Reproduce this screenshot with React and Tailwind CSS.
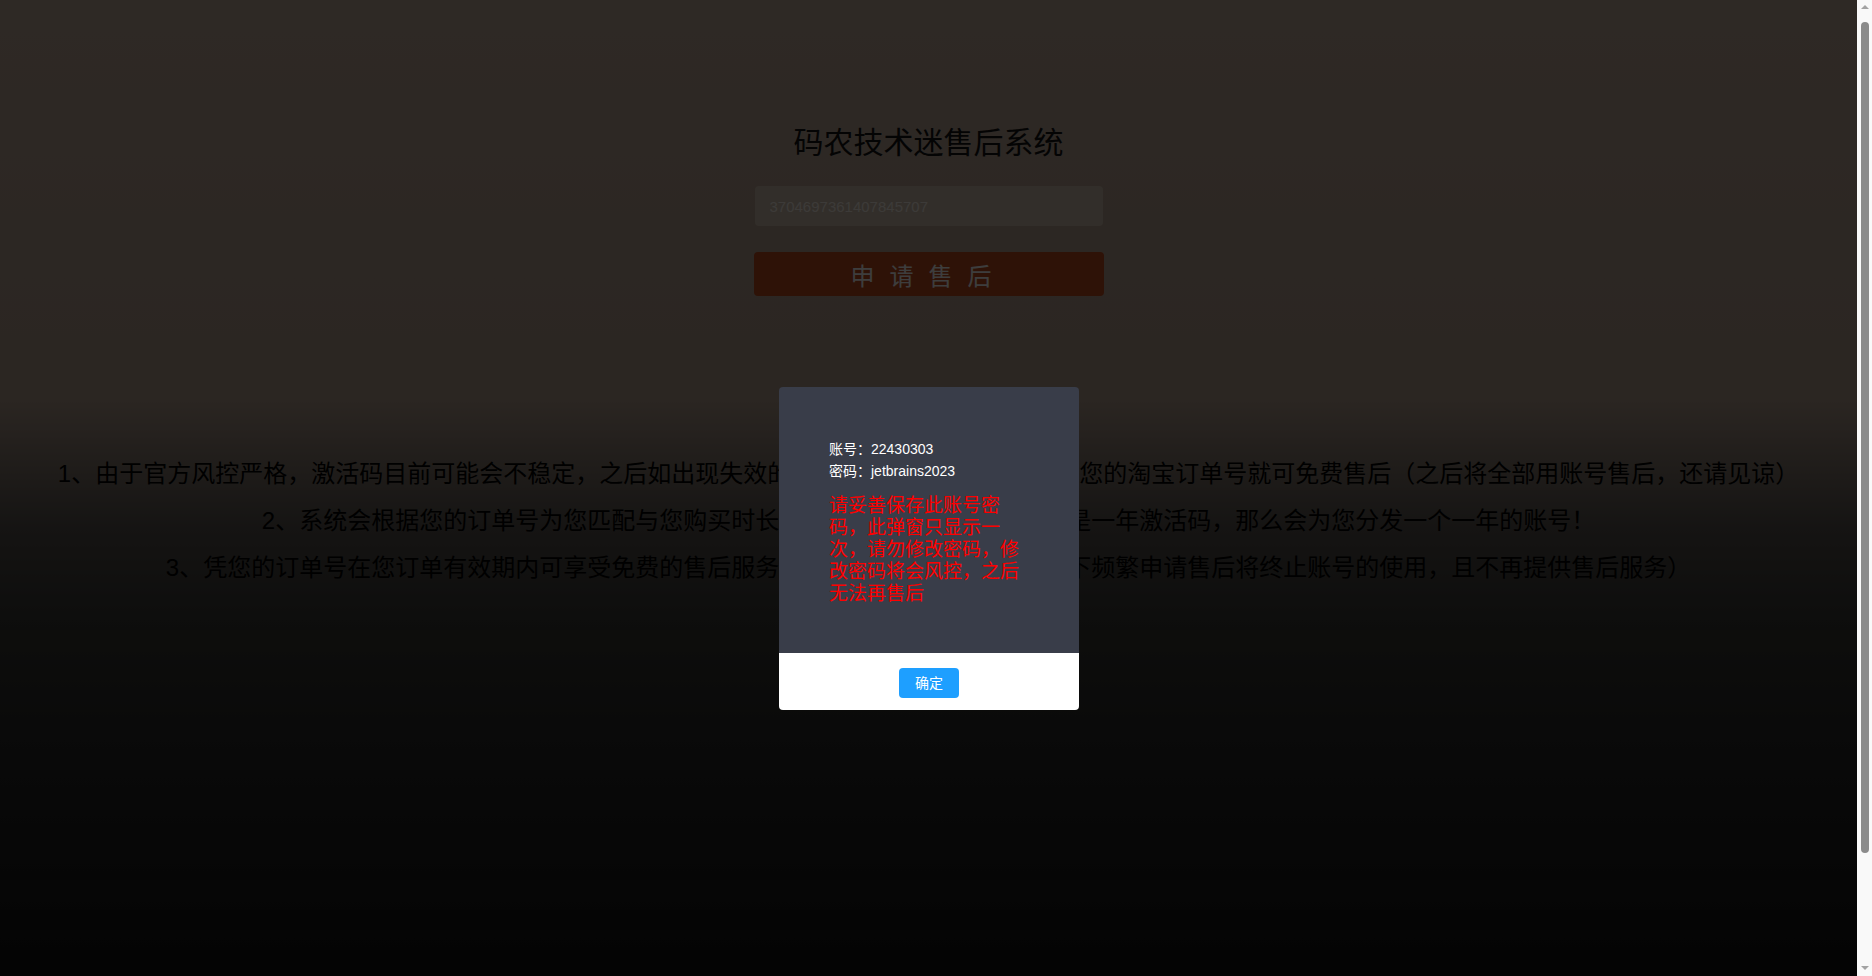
import React, { useState } from 'react';

const tips = [
  '1、由于官方风控严格，激活码目前可能会不稳定，之后如出现失效的情况，只需在此处重新输入您的淘宝订单号就可免费售后（之后将全部用账号售后，还请见谅）',
  '2、系统会根据您的订单号为您匹配与您购买时长相同的账号，比如您购买的是一年激活码，那么会为您分发一个一年的账号！',
  '3、凭您的订单号在您订单有效期内可享受免费的售后服务（若账号在正常使用的情况下频繁申请售后将终止账号的使用，且不再提供售后服务）',
];

const FakeScrollbar = () => (
  <div className="w-[15px] h-full bg-[#f9f9f9] flex flex-col items-center">
    <div className="mt-[5px] w-0 h-0 border-x-[4px] border-x-transparent border-b-[4px] border-b-[#a3a3a3]" />
    <div className="mt-[13px] w-[8px] h-[831px] rounded-full bg-[#8b8b8b]" />
    <div className="flex-1" />
    <div className="mb-[6px] w-0 h-0 border-x-[4px] border-x-transparent border-t-[4px] border-t-[#a3a3a3]" />
  </div>
);

export default function App() {
  const [open, setOpen] = useState(true);

  return (
    <div
      className="flex w-full h-[976px] overflow-hidden"
      style={{ fontFamily: '"Liberation Sans", "Noto Sans CJK SC", sans-serif' }}
    >
      <div className="relative flex-1 h-full bg-[linear-gradient(to_bottom,#c0ab9a_0px,#b39e8e_400px,#58534f_530px,#3a3a36_620px,#2a2a2a_740px,#111111_976px)]">
        {/* Form */}
        <div className="flex flex-col items-center pt-[123px]">
          <h1 className="text-[30px] leading-[40px] text-[#111]">码农技术迷售后系统</h1>
          <input
            defaultValue="3704697361407845707"
            className="mt-[23px] w-[348px] h-10 px-[15px] rounded bg-[#d0c0af] text-[15px] text-[#faf2e9] outline-none"
          />
          <button className="mt-[26px] w-[350px] h-[44px] pt-[5px] rounded bg-[#c04b1d] text-white text-2xl tracking-[15px]">
            申请售后
          </button>
        </div>

        {/* Tips */}
        <div className="mt-[154px] text-center text-2xl leading-[47px] text-black">
          {tips.map((t, i) => (
            <p key={i}>{t}</p>
          ))}
        </div>

        {/* Layer shade + dialog */}
        {open && (
          <>
            <div className="absolute inset-0 bg-black/[0.76]" />
            <div className="absolute left-[779px] top-[387px] w-[300px] rounded-sm overflow-hidden">
              <div className="bg-[#393d49] px-[50px] pt-[51px] pb-[48px] text-white">
                <div className="text-sm leading-[22px]">
                  <p>账号：22430303</p>
                  <p>密码：jetbrains2023</p>
                </div>
                <p className="mt-[13px] text-[19px] leading-[22px] text-[#ff0000]">
                  请妥善保存此账号密码，此弹窗只显示一次，请勿修改密码，修改密码将会风控，之后无法再售后
                </p>
              </div>
              <div className="bg-white flex justify-center pt-[15px] pb-3">
                <button
                  onClick={() => setOpen(false)}
                  className="w-[60px] h-[30px] rounded-sm bg-[#1e9fff] text-white text-sm"
                >
                  确定
                </button>
              </div>
            </div>
          </>
        )}
      </div>
      <FakeScrollbar />
    </div>
  );
}
